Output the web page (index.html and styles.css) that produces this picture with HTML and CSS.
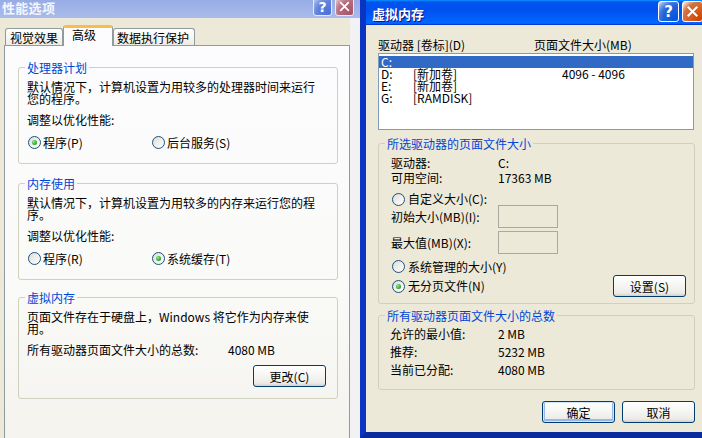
FILE: index.html
```html
<!DOCTYPE html>
<html lang="zh-CN">
<head>
<meta charset="utf-8">
<title>性能选项 / 虚拟内存</title>
<link rel="stylesheet" href="styles.css">
</head>
<body>
<div class="screen">
  <section class="lwin">
    <header class="ltitle">
      <span class="ttext">性能选项</span>
      <span class="tbtns">
        <span class="tbtn help">?</span>
        <span class="tbtn close"><svg viewBox="0 0 21 21" width="19" height="19"><path d="M6 6 L15 15 M15 6 L6 15" stroke="#fff" stroke-width="2.2" stroke-linecap="square"/></svg></span>
      </span>
    </header>
    <div class="lbody">
      <div class="lcontent">
        <div class="tabs">
          <div class="tab t1">视觉效果</div>
          <div class="tab sel t2">高级</div>
          <div class="tab t3">数据执行保护</div>
        </div>
        <div class="panel">
          <fieldset class="grp g1">
            <legend>处理器计划</legend>
            <p class="desc">默认情况下，计算机设置为用较多的处理器时间来运行<br>您的程序。</p>
            <p class="adj">调整以优化性能:</p>
            <div class="opts">
              <span class="opt"><span class="radio on"></span>程序(P)</span>
              <span class="opt"><span class="radio"></span>后台服务(S)</span>
            </div>
          </fieldset>
          <fieldset class="grp g2">
            <legend>内存使用</legend>
            <p class="desc">默认情况下，计算机设置为用较多的内存来运行您的程<br>序。</p>
            <p class="adj">调整以优化性能:</p>
            <div class="opts">
              <span class="opt"><span class="radio"></span>程序(R)</span>
              <span class="opt"><span class="radio on"></span>系统缓存(T)</span>
            </div>
          </fieldset>
          <fieldset class="grp g3">
            <legend>虚拟内存</legend>
            <p class="desc">页面文件存在于硬盘上，Windows 将它作为内存来使<br>用。</p>
            <div class="total"><span class="tlbl">所有驱动器页面文件大小的总数:</span><span>4080 MB</span></div>
            <div class="brow"><span class="btn">更改(C)</span></div>
          </fieldset>
        </div>
      </div>
      <div class="lframe"></div>
    </div>
  </section>

  <section class="rwin">
    <header class="rtitle">
      <span class="rtext">虚拟内存</span>
      <span class="tbtns rb">
        <span class="tbtn help">?</span>
        <span class="tbtn close"><svg viewBox="0 0 21 21" width="21" height="21"><path d="M6 6 L15 15 M15 6 L6 15" stroke="#fff" stroke-width="2.2" stroke-linecap="square"/></svg></span>
      </span>
    </header>
    <div class="rbody">
      <div class="hdr"><span class="hc1">驱动器 [卷标](D)</span><span>页面文件大小(MB)</span></div>
      <div class="list">
        <div class="lrow sel"><span>C:</span><span></span><span></span></div>
        <div class="lrow"><span>D:</span><span>[新加卷]</span><span>4096 - 4096</span></div>
        <div class="lrow"><span>E:</span><span>[新加卷]</span><span></span></div>
        <div class="lrow"><span>G:</span><span>[RAMDISK]</span><span></span></div>
      </div>
      <fieldset class="rg rg1">
        <legend>所选驱动器的页面文件大小</legend>
        <div class="kv r1"><span class="k">驱动器:</span><span>C:</span></div>
        <div class="kv r2"><span class="k">可用空间:</span><span>17363 MB</span></div>
        <div class="ropt r3"><span class="radio"></span>自定义大小(C):</div>
        <div class="kv tbrow r4"><span class="k">初始大小(MB)(I):</span><span class="tbox"></span></div>
        <div class="kv tbrow r5"><span class="k">最大值(MB)(X):</span><span class="tbox"></span></div>
        <div class="ropt r6"><span class="radio"></span>系统管理的大小(Y)</div>
        <div class="lastrow">
          <span class="ropt"><span class="radio on"></span>无分页文件(N)</span>
          <span class="btn">设置(S)</span>
        </div>
      </fieldset>
      <fieldset class="rg rg2">
        <legend>所有驱动器页面文件大小的总数</legend>
        <div class="kv2"><span class="k2">允许的最小值:</span><span>2 MB</span></div>
        <div class="kv2"><span class="k2">推荐:</span><span>5232 MB</span></div>
        <div class="kv2"><span class="k2">当前已分配:</span><span>4080 MB</span></div>
      </fieldset>
      <div class="rbtns">
        <span class="btn def">确定</span>
        <span class="btn">取消</span>
      </div>
    </div>
  </section>
</div>
</body>
</html>
```

FILE: styles.css
```css
* { box-sizing: border-box; }
html, body {
  margin: 0;
  padding: 0;
  width: 702px;
  height: 438px;
  overflow: hidden;
}
body {
  font-family: "Noto Sans CJK SC", "Noto Sans", sans-serif;
  font-size: 12px;
  color: #000;
  background: #ECE9D8;
}
p { margin: 0; }

.screen {
  display: flex;
  width: 702px;
  height: 438px;
}

/* ---------- title bar buttons ---------- */
.tbtns {
  display: flex;
  gap: 3px;
}
.tbtn {
  display: flex;
  align-items: center;
  justify-content: center;
  border: 1px solid #fff;
  border-radius: 3px;
  color: #fff;
  font-family: "DejaVu Sans", sans-serif;
  font-weight: bold;
  overflow: hidden;
}

/* ---------- left (inactive) window ---------- */
.lwin {
  width: 360px;
  flex: none;
  height: 438px;
  display: flex;
  flex-direction: column;
}
.ltitle {
  height: 18px;
  flex: none;
  display: flex;
  align-items: flex-end;
  justify-content: space-between;
  padding: 0 6px 2px 2px;
  background: linear-gradient(180deg, #97ACE5 0%, #A3B6E9 60%, #A9BBEA 100%);
}
.ttext {
  align-self: center;
  line-height: 16px;
  font-size: 13px;
  font-weight: bold;
  color: #F4F6FC;
  letter-spacing: 0.3px;
}
.ltitle .tbtn {
  width: 19px;
  height: 19px;
  font-size: 14px;
  border-color: #E4EAF8;
}
.ltitle .help {
  background: radial-gradient(circle at 90% 90%, #4C72D6 0, #5E82DD 55%, #7896E2 70%, #B4C5EE 92%, #E8EEFA 100%);
}
.ltitle .close {
  background: radial-gradient(circle at 90% 90%, #A65568 0, #B46A7C 55%, #C28393 70%, #E2C4CD 92%, #F6ECEF 100%);
}

.lbody {
  flex: 1;
  display: flex;
  min-height: 0;
}
.lcontent {
  width: 350px;
  flex: none;
  background: #ECE9D8;
  padding: 7px 0 0 4px;
  display: flex;
  flex-direction: column;
}
.lframe {
  flex: 1;
  background: #F2F1F3;
}

.tabs {
  display: flex;
  align-items: flex-end;
  height: 20px;
  padding-left: 1px;
  position: relative;
  z-index: 1;
}
.tab {
  height: 17px;
  border: 1px solid #919B9C;
  border-bottom: none;
  border-radius: 3px 3px 0 0;
  background: linear-gradient(180deg, #FFFFFF, #F7F7F3 50%, #ECEBE6);
  padding-top: 2px;
  line-height: 13px;
  white-space: nowrap;
}
.t1 { width: 58px; padding-left: 4px; }
.t2 { width: 50px; padding-left: 8px; }
.t3 { width: 82px; padding-left: 3px; }
.tab.sel {
  height: 21px;
  margin-bottom: -1px;
  border-top: 3px solid #F9BE4A;
  padding-top: 0;
  background: #FCFCFE;
}

.panel {
  flex: 1;
  width: 346px;
  border: 1px solid #919B9C;
  border-bottom: none;
  background: linear-gradient(180deg, #FCFCFE 0%, #FAFAF8 60%, #F4F3EE 100%);
  padding-top: 15px;
}

.grp {
  margin: 0 11px 0 13px;
  padding: 7px 11px 14px 8px;
  border: 1px solid #D0D0BF;
  border-radius: 3px;
  min-width: 0;
}
.grp legend {
  padding: 0 2px;
  margin-left: -2px;
  line-height: 13px;
  color: #0046D5;
}
.g2 { margin-top: 13px; }
.g3 { margin-top: 11px; padding-bottom: 11px; }

.desc {
  line-height: 12px;
  white-space: nowrap;
}
.adj {
  margin-top: 9px;
  line-height: 12px;
}
.opts {
  margin-top: 10px;
  display: grid;
  grid-template-columns: 124px auto;
  line-height: 13px;
  padding-left: 1px;
}
.opt {
  display: flex;
  align-items: center;
  white-space: nowrap;
}
.total {
  margin-top: 9px;
  line-height: 12px;
  display: flex;
  white-space: nowrap;
}
.tlbl { width: 201px; flex: none; }
.brow {
  display: flex;
  justify-content: flex-end;
  margin-top: 9px;
}

/* ---------- radio ---------- */
.radio {
  width: 13px;
  height: 13px;
  flex: none;
  border-radius: 50%;
  border: 1px solid #1C5180;
  background: linear-gradient(135deg, #DCDCD7 0%, #F2F2EF 60%, #FFFFFF 100%);
  margin-right: 2px;
  display: inline-flex;
  align-items: center;
  justify-content: center;
}
.radio.on::after {
  content: "";
  width: 5px;
  height: 5px;
  border-radius: 50%;
  background: radial-gradient(circle at 35% 35%, #9BE59A 0%, #36B236 55%, #1A861A 100%);
}

/* ---------- push buttons ---------- */
.btn {
  width: 73px;
  height: 22px;
  flex: none;
  display: flex;
  align-items: center;
  justify-content: center;
  border: 1px solid #003C74;
  border-radius: 3px;
  background: linear-gradient(180deg, #FFFFFF 0%, #F6F6F3 45%, #ECEBE6 85%, #D6D0C5 100%);
  line-height: 13px;
  white-space: nowrap;
}
.btn.def {
  box-shadow: inset 0 0 0 1px #CEE7FF, inset 0 -1px 0 2px #98B8EA;
}

/* ---------- right (active) window ---------- */
.rwin {
  width: 355px;
  flex: none;
  height: 438px;
  display: flex;
  flex-direction: column;
  background: #ECE9D8;
  border-left: 6px solid #0B34C2;
  border-right: 6px solid #0B34C2;
  border-bottom: 6px solid #0A2B9C;
}
.rtitle {
  height: 25px;
  flex: none;
  display: flex;
  align-items: flex-end;
  justify-content: space-between;
  padding: 0 6px 3px 6px;
  background: linear-gradient(180deg, #0997FF 0%, #0053EE 8%, #0050EE 40%, #0066FF 88%, #0066FF 93%, #005BFF 95%, #003DD7 96%, #003DD7 100%);
}
.rtext {
  align-self: flex-start;
  margin-top: 1px;
  line-height: 25px;
  font-size: 13px;
  font-weight: bold;
  color: #fff;
  text-shadow: 1px 1px #0F1089;
}
.rtitle .tbtn {
  width: 21px;
  height: 21px;
  font-size: 15px;
}
.rtitle .help {
  background: radial-gradient(circle at 90% 90%, #0054E9 0, #2263D5 55%, #4479E4 70%, #A3BBEC 90%, #FFFFFF 100%);
}
.rtitle .close {
  background: radial-gradient(circle at 90% 90%, #CC4600 0, #DC6527 55%, #CD7546 70%, #FFCCB2 90%, #FFFFFF 100%);
}

.rbody {
  flex: 1;
  padding: 13px 0 0 12px;
  display: flex;
  flex-direction: column;
}
.hdr {
  display: flex;
  line-height: 13px;
  white-space: nowrap;
}
.hc1 { width: 156px; flex: none; }

.list {
  margin-top: 2px;
  width: 316px;
  height: 77px;
  border: 1px solid #7F9DB9;
  background: #FFFFFF;
  padding-top: 2px;
}
.lrow {
  display: grid;
  grid-template-columns: 32px 149px auto;
  height: 12px;
  line-height: 12px;
  padding-left: 2px;
  white-space: nowrap;
}
.lrow.sel {
  background: #316AC5;
  color: #FFFFFF;
}

.rg {
  width: 317px;
  margin: 0;
  border: 1px solid #D0D0BF;
  border-radius: 3px;
  min-width: 0;
}
.rg legend {
  padding: 0 2px;
  line-height: 13px;
  color: #0046D5;
}
.rg1 {
  margin-top: 7px;
  padding: 6px 8px 6px 12px;
}
.rg1 legend { margin-left: -6px; }

.kv {
  display: flex;
  align-items: center;
  line-height: 13px;
  white-space: nowrap;
}
.kv .k { width: 107px; flex: none; }
.r2 { margin-top: 2px; }
.ropt {
  display: flex;
  align-items: center;
  line-height: 12px;
  height: 12px;
  white-space: nowrap;
}
.ropt .radio { margin-left: 1px; margin-right: 3px; }
.r3 { margin-top: 9px; }
.tbrow { height: 23px; }
.r4 { margin-top: 0; }
.r5 { margin-top: 3px; }
.r6 { margin-top: 6px; height: 13px; line-height: 13px; }
.tbox {
  width: 60px;
  height: 23px;
  border: 1px solid #A9A8A1;
  background: #ECE9D8;
}
.lastrow {
  margin-top: 2px;
  height: 22px;
  display: flex;
  align-items: center;
  justify-content: space-between;
}

.rg2 {
  margin-top: 5px;
  padding: 3px 8px 10px 11px;
}
.rg2 legend { margin-left: -5px; }
.kv2 {
  display: flex;
  line-height: 18px;
  white-space: nowrap;
}
.k2 { width: 108px; flex: none; }

.rbtns {
  width: 317px;
  display: flex;
  justify-content: flex-end;
  gap: 7px;
  margin-top: 11px;
}
```
